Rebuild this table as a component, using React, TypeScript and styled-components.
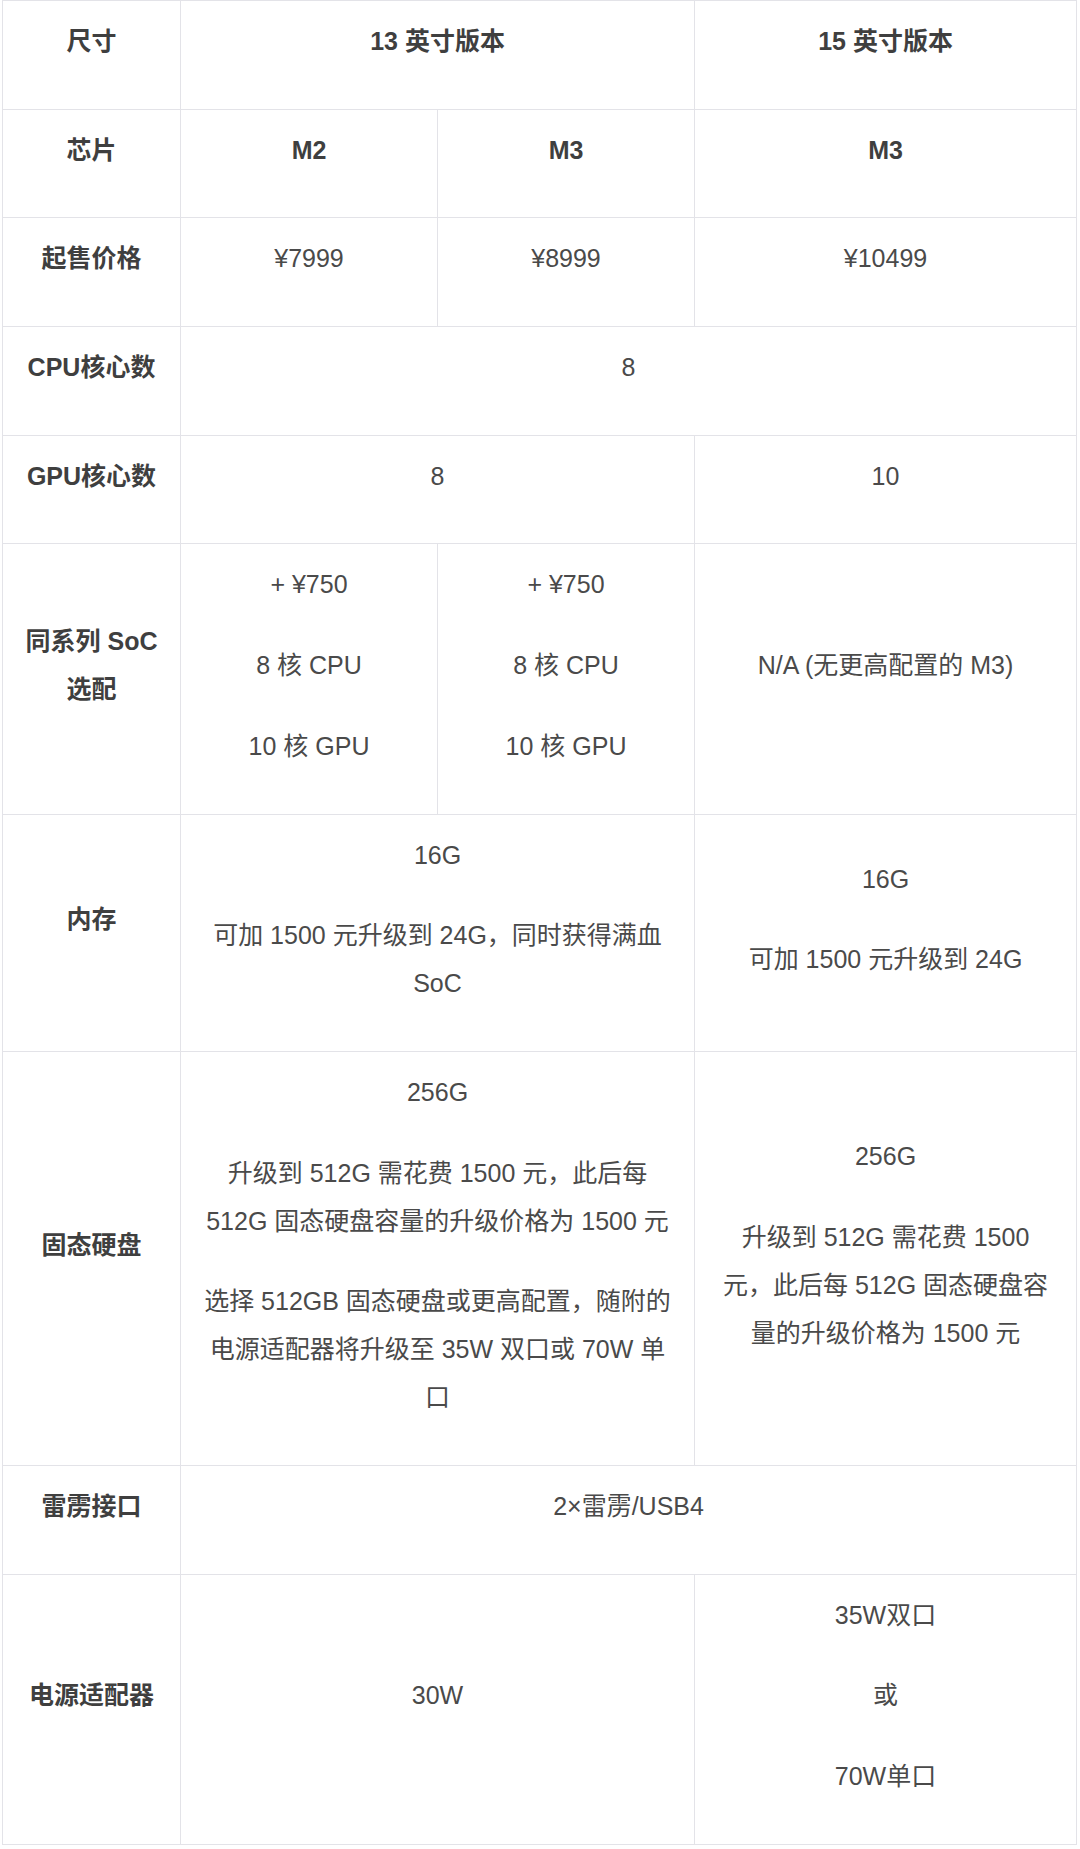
import React from 'react';
import styled, { createGlobalStyle } from 'styled-components';

interface CellData {
	paras: string[];
	span?: number;
	bold?: boolean;
}

interface RowData {
	label: string;
	cells: CellData[];
}

// 每一行：左侧标签 + 若干单元格，单元格里每个字符串是一段
const rows: RowData[] = [
	{
		label: '尺寸',
		cells: [
			{ paras: ['13 英寸版本'], span: 2, bold: true },
			{ paras: ['15 英寸版本'], bold: true },
		],
	},
	{
		label: '芯片',
		cells: [
			{ paras: ['M2'], bold: true },
			{ paras: ['M3'], bold: true },
			{ paras: ['M3'], bold: true },
		],
	},
	{
		label: '起售价格',
		cells: [{ paras: ['¥7999'] }, { paras: ['¥8999'] }, { paras: ['¥10499'] }],
	},
	{
		label: 'CPU核心数',
		cells: [{ paras: ['8'], span: 3 }],
	},
	{
		label: 'GPU核心数',
		cells: [{ paras: ['8'], span: 2 }, { paras: ['10'] }],
	},
	{
		label: '同系列 SoC\n选配',
		cells: [
			{ paras: ['+ ¥750', '8 核 CPU', '10 核 GPU'] },
			{ paras: ['+ ¥750', '8 核 CPU', '10 核 GPU'] },
			{ paras: ['N/A (无更高配置的 M3)'] },
		],
	},
	{
		label: '内存',
		cells: [
			{ paras: ['16G', '可加 1500 元升级到 24G，同时获得满血\nSoC'], span: 2 },
			{ paras: ['16G', '可加 1500 元升级到 24G'] },
		],
	},
	{
		label: '固态硬盘',
		cells: [
			{
				paras: [
					'256G',
					'升级到 512G 需花费 1500 元，此后每\n512G 固态硬盘容量的升级价格为 1500 元',
					'选择 512GB 固态硬盘或更高配置，随附的\n电源适配器将升级至 35W 双口或 70W 单\n口',
				],
				span: 2,
			},
			{ paras: ['256G', '升级到 512G 需花费 1500\n元，此后每 512G 固态硬盘容\n量的升级价格为 1500 元'] },
		],
	},
	{
		label: '雷雳接口',
		cells: [{ paras: ['2×雷雳/USB4'], span: 3 }],
	},
	{
		label: '电源适配器',
		cells: [{ paras: ['30W'], span: 2 }, { paras: ['35W双口', '或', '70W单口'] }],
	},
];

const colWidths = [178, 257, 257, 382];

const App = () => {
	return (
		<>
			<GlobalStyle />
			<Page>
				<Table>
					<colgroup>
						{colWidths.map((w, idx) => (
							<Col key={idx} $width={w} />
						))}
					</colgroup>
					<tbody>
						{rows.map((row) => (
							<tr key={row.label}>
								<Cell $bold>
									<Para>{row.label}</Para>
								</Cell>
								{row.cells.map((cell, idx) => (
									<Cell key={idx} colSpan={cell.span} $bold={cell.bold}>
										{cell.paras.map((text, i) => (
											<Para key={i}>{text}</Para>
										))}
									</Cell>
								))}
							</tr>
						))}
					</tbody>
				</Table>
			</Page>
		</>
	);
};

export default App;

const GlobalStyle = createGlobalStyle`
	html, body {
		margin: 0;
		padding: 0;
		background: #ffffff;
	}
	body {
		font-family: "Liberation Sans", "Noto Sans CJK SC", sans-serif;
		color: #474747;
	}
`;

const Page = styled.div`
	width: 1080px;
	padding-left: 2px;
`;

const Table = styled.table`
	width: 1074px;
	table-layout: fixed;
	border-collapse: collapse;
	border: 1px solid #e3e3e8;
`;

const Col = styled.col<{ $width: number }>`
	width: ${(p) => p.$width}px;
`;

const Cell = styled.td<{ $bold?: boolean }>`
	border: 1px solid #e3e3e8;
	padding: 16px 20px 11px;
	text-align: center;
	vertical-align: middle;
	font-size: 25px;
	line-height: 48px;
	font-weight: ${(p) => (p.$bold ? 700 : 400)};
	color: ${(p) => (p.$bold ? '#3f3f3f' : '#4a4a4a')};
`;

const Para = styled.p`
	margin: 0 0 32.7px;
	white-space: pre-line;
`;
